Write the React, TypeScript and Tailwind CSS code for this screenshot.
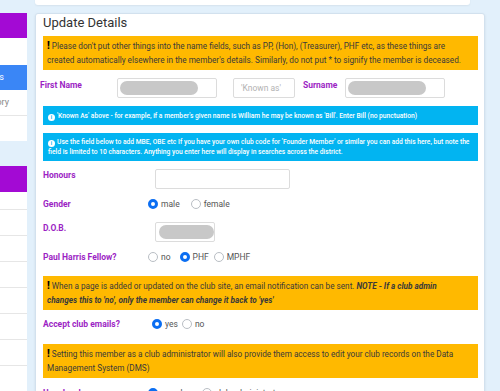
import React from "react";

const font = { fontFamily: "Roboto, 'Liberation Sans', sans-serif" };

function Radio({ checked }: { checked?: boolean }) {
    return checked ? (
        <span className="inline-block h-[10px] w-[10px] shrink-0 rounded-full border-[3px] border-[#0b6ef2] bg-white" />
    ) : (
        <span className="inline-block h-[10px] w-[10px] shrink-0 rounded-full border border-[#b9bec4] bg-white" />
    );
}

function Choice({ checked, label, className = "" }: { checked?: boolean; label: string; className?: string }) {
    return (
        <span className={`flex items-center gap-[3px] ${className}`}>
            <Radio checked={checked} />
            <span className="text-[8.5px] text-[#555]">{label}</span>
        </span>
    );
}

function Pill({ width }: { width: string }) {
    return <span className={`block h-[14px] rounded-full bg-[#c8c8c8] ${width}`} />;
}

function Warn({ children, className = "" }: { children: React.ReactNode; className?: string }) {
    return (
        <div className={`shrink-0 bg-[#ffb900] px-[4px] py-[3px] text-[8.2px] leading-[14px] text-[#3a3a3a] ${className}`}>
            {children}
        </div>
    );
}

function Info({ children, className = "" }: { children: React.ReactNode; className?: string }) {
    return (
        <div className={`shrink-0 bg-[#02b4f1] px-[5px] text-[6.7px] font-medium leading-[10px] text-white ${className}`}>
            {children}
        </div>
    );
}

function InfoDot() {
    return (
        <span className="mr-[2px] inline-flex h-[7px] w-[7px] translate-y-[1px] items-center justify-center rounded-full bg-white text-[5px] font-bold leading-none text-[#02b4f1]">
            i
        </span>
    );
}

function Bang() {
    return <span className="mr-[2px] inline-block text-[10px] font-black leading-[10px] text-black">!</span>;
}

const label = "text-[8.5px] font-bold leading-[12px] text-[#9c1fc4]";

function Sidebar() {
    return (
        <div className="flex w-[27px] shrink-0 flex-col pt-[13px]">
            <div className="h-[25px] shrink-0 bg-[#a30ad4]" />
            <div className="h-[27px] shrink-0 bg-white" />
            <div className="flex h-[25px] shrink-0 items-center justify-end overflow-hidden bg-[#3a86f6] pr-[23px] text-[9px] text-white">
                <span className="whitespace-nowrap">Members</span>
            </div>
            <div className="flex h-[26px] shrink-0 items-center justify-end overflow-hidden border-b border-[#e6e6e6] bg-white pr-[18px] text-[9px] text-[#888]">
                <span className="whitespace-nowrap">History</span>
            </div>
            <div className="h-[25px] shrink-0 bg-white" />
            <div className="h-[25px] shrink-0" />
            <div className="h-[26px] shrink-0 bg-[#a30ad4]" />
            <div className="h-[18px] shrink-0 border-b border-[#e6e6e6] bg-white" />
            {[0, 1, 2, 3, 4, 5, 6].map((i) => (
                <div key={i} className="h-[26px] shrink-0 border-b border-[#e6e6e6] bg-white" />
            ))}
        </div>
    );
}

export default function App() {
    return (
        <div className="flex h-[391px] w-[500px] gap-[8px] overflow-hidden bg-[#e2f0fb]" style={font}>
            <Sidebar />
            <div className="flex w-[450px] shrink-0 flex-col">
                <div className="mt-[-5px] h-[10px] w-[435px] shrink-0 rounded-[3px] bg-white shadow-[0_1px_2px_rgba(0,0,0,0.06)]" />
                <div className="mt-[8px] flex shrink-0 flex-col rounded-[3px] border border-[#d2e1ee] bg-white pl-[7px] pr-[6px] shadow-[0_1px_3px_rgba(0,0,0,0.08)]">
                    <h1 className="mb-[4px] text-[13px] leading-[18px] text-[#333]">Update Details</h1>

                    <Warn>
                        <Bang />
                        Please don't put other things into the name fields, such as PP, (Hon), (Treasurer), PHF etc, as these things are created automatically elsewhere in the member's details. Similarly, do not put * to signify the member is deceased.
                    </Warn>

                    <div className="ml-[-3px] mt-[8px] flex h-[20px] shrink-0 items-start">
                        <span className={`${label} mt-[1px] w-[77px]`}>First Name</span>
                        <span className="flex h-[20px] w-[100px] items-center rounded-[2px] border border-[#dcdcdc] px-[2px]">
                            <Pill width="w-[78px]" />
                        </span>
                        <span className="ml-[16px] flex h-[20px] w-[62px] items-center rounded-[2px] border border-[#dcdcdc] px-[7px] text-[8.5px] text-[#b3b3b3]">
                            'Known as'
                        </span>
                        <span className={`${label} ml-[8px] mt-[1px] w-[42px]`}>Surname</span>
                        <span className="flex h-[20px] w-[100px] items-center rounded-[2px] border border-[#dcdcdc] px-[2px]">
                            <Pill width="w-[78px]" />
                        </span>
                    </div>

                    <Info className="mt-[8px] flex h-[19px] items-center">
                        <span>
                            <InfoDot />
                            'Known As' above - for example, if a member's given name is William he may be known as 'Bill'. Enter Bill (no punctuation)
                        </span>
                    </Info>

                    <Info className="mt-[8px] py-[4px]">
                        <InfoDot />
                        Use the field below to add MBE, OBE etc If you have your own club code for 'Founder Member' or similar you can add this here, but note the field is limited to 10 characters. Anything you enter here will display in searches across the district.
                    </Info>

                    <div className="mt-[8px] flex h-[20px] shrink-0 items-start">
                        <span className={`${label} w-[112px]`}>Honours</span>
                        <span className="h-[20px] w-[135px] rounded-[2px] border border-[#dcdcdc]" />
                    </div>

                    <div className="mt-[8px] flex h-[14px] shrink-0 items-center">
                        <span className={`${label} w-[105px]`}>Gender</span>
                        <Choice checked label="male" />
                        <Choice label="female" className="ml-[11px]" />
                    </div>

                    <div className="mt-[11px] flex h-[20px] shrink-0 items-start">
                        <span className={`${label} w-[112px]`}>D.O.B.</span>
                        <span className="flex h-[20px] w-[60px] items-center rounded-[2px] border border-[#dcdcdc] pl-[3px]">
                            <Pill width="w-[56px]" />
                        </span>
                    </div>

                    <div className="mt-[8px] flex h-[14px] shrink-0 items-center">
                        <span className={`${label} w-[105px]`}>Paul Harris Fellow?</span>
                        <Choice label="no" />
                        <Choice checked label="PHF" className="ml-[9px]" />
                        <Choice label="MPHF" className="ml-[5px]" />
                    </div>

                    <Warn className="mt-[12px]">
                        <Bang />
                        When a page is added or updated on the club site, an email notification can be sent.{" "}
                        <b className="italic">
                            NOTE - If a club admin
                            <br />
                            changes this to 'no', only the member can change it back to 'yes'
                        </b>
                    </Warn>

                    <div className="mt-[7px] flex h-[14px] shrink-0 items-center">
                        <span className={`${label} w-[109px]`}>Accept club emails?</span>
                        <Choice checked label="yes" />
                        <Choice label="no" className="ml-[4px]" />
                    </div>

                    <Warn className="mt-[13px]">
                        <Bang />
                        Setting this member as a club administrator will also provide them access to edit your club records on the Data Management System (DMS)
                    </Warn>

                    <div className="mt-[8px] flex h-[14px] shrink-0 items-center">
                        <span className={`${label} w-[105px]`}>User level</span>
                        <Choice checked label="member" />
                        <Choice label="club administrator" className="ml-[9px]" />
                    </div>
                    <div className="h-[20px] shrink-0" />
                </div>
            </div>
        </div>
    );
}
